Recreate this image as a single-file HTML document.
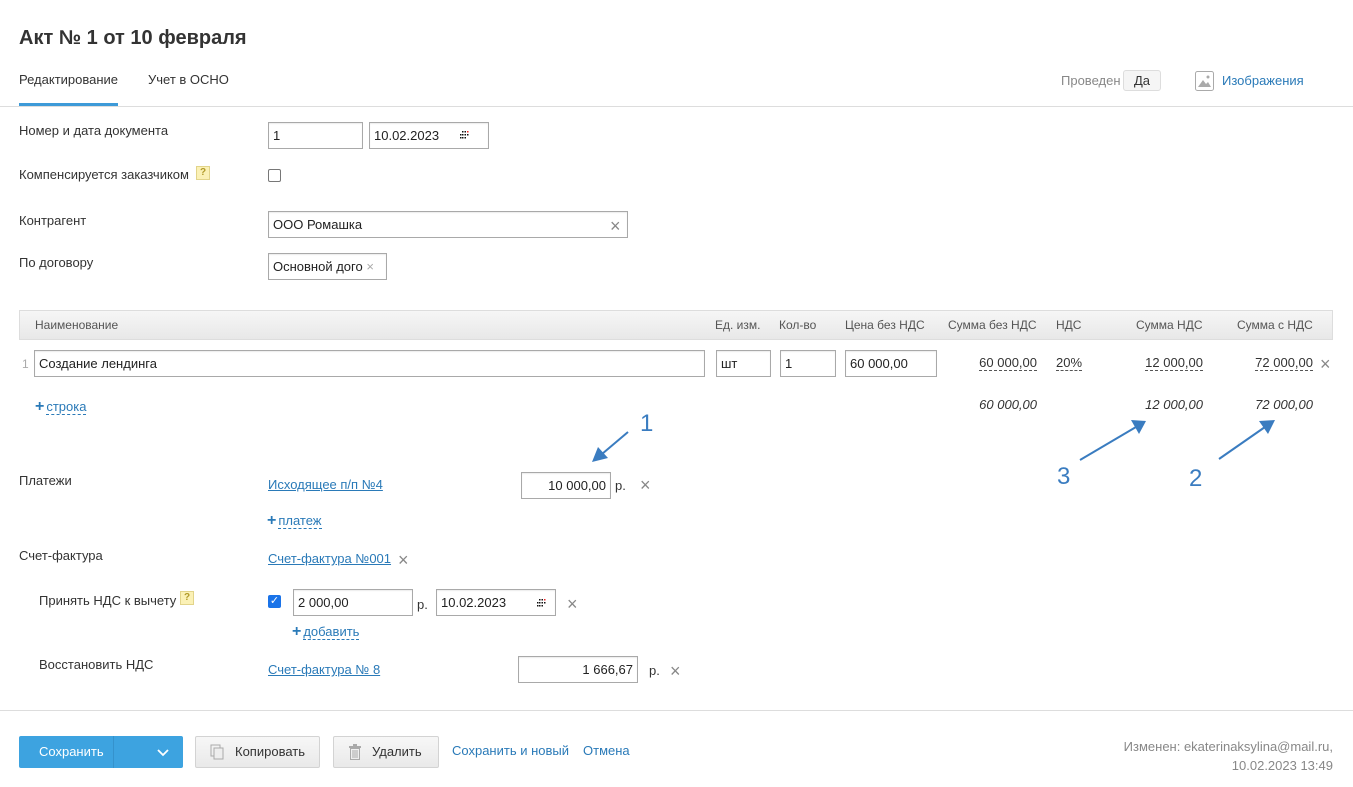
<!DOCTYPE html>
<html><head><meta charset="utf-8"><style>
*{box-sizing:border-box;margin:0;padding:0}
body{width:1353px;height:787px;background:#fff;font-family:"Liberation Sans",Arial,sans-serif;font-size:13px;color:#333;position:relative;overflow:hidden}
.a{position:absolute;white-space:nowrap;line-height:16px}
.in{position:absolute;border:1px solid #a9a9a9;background:#fff;font-size:13px;line-height:25px;padding:0 4px;color:#222;white-space:nowrap;box-shadow:inset 0 1px 1px rgba(0,0,0,.08)}
.r{text-align:right}
.lk{color:#2a7ab8;text-decoration:underline}
.dl{color:#2a7ab8;border-bottom:1px dashed #2a7ab8;line-height:15px}
.x{position:absolute;color:#888;font-size:18px;line-height:16px}
.q{position:absolute;width:14px;height:14px;background:#fbf1b6;border:1px solid #e2d48a;color:#b19a2a;font-size:10px;line-height:12px;text-align:center;font-weight:bold}
.th{position:absolute;top:318px;font-size:12px;color:#555;line-height:14px;white-space:nowrap}
.num{position:absolute;font-size:13px;color:#333;line-height:16px;white-space:nowrap;text-align:right}
.ds{border-bottom:1px dashed #555}
.it{font-style:italic}
.plus{color:#2a7ab8;font-weight:bold;font-size:16px;margin-right:2px}
.btn{position:absolute;top:736px;height:32px;border:1px solid #d3d3d3;border-radius:2px;background:linear-gradient(#f7f7f7,#e9e9e9);line-height:30px;color:#333;font-size:13px}
.cal{position:absolute}
</style></head><body>

<div class="a" style="left:19px;top:26px;font-size:20px;line-height:24px;font-weight:bold;color:#333">Акт № 1 от 10 февраля</div>
<div class="a" style="left:19px;top:72px">Редактирование</div>
<div style="position:absolute;left:19px;top:103px;width:99px;height:3px;background:#3d9ad8"></div>
<div class="a" style="left:148px;top:72px">Учет в ОСНО</div>
<div style="position:absolute;left:0;top:106px;width:1353px;height:1px;background:#ddd"></div>
<div class="a" style="left:1061px;top:73px;color:#888">Проведен</div>
<div style="position:absolute;left:1123px;top:70px;width:38px;height:21px;border:1px solid #ddd;border-radius:3px;background:#f5f5f5;text-align:center;line-height:19px;color:#333">Да</div>
<svg style="position:absolute;left:1195px;top:71px" width="19" height="20" viewBox="0 0 19 20"><rect x="0.5" y="0.5" width="18" height="19" rx="2" fill="#fff" stroke="#aaa"/><path d="M3 16 L8 9 L11 13 L13 11 L16 16Z" fill="#aaa"/><circle cx="13" cy="6" r="1.5" fill="#aaa"/></svg>
<div class="a" style="left:1222px;top:73px;color:#2a7ab8">Изображения</div>

<div class="a" style="left:19px;top:123px">Номер и дата документа</div>
<div class="in" style="left:268px;top:122px;width:95px;height:27px">1</div>
<div class="in" style="left:369px;top:122px;width:120px;height:27px">10.02.2023</div>
<svg class="cal" style="left:460px;top:131px" width="10" height="8"><g fill="#111"><rect x="2" y="0" width="1.5" height="1.5"/><rect x="4.5" y="0" width="1.5" height="1.5"/><rect x="7" y="0" width="1.5" height="1.5" fill="#e22"/><rect x="0" y="3" width="1.5" height="1.5"/><rect x="2" y="3" width="1.5" height="1.5"/><rect x="4.5" y="3" width="1.5" height="1.5"/><rect x="7" y="3" width="1.5" height="1.5"/><rect x="0" y="6" width="1.5" height="1.5"/><rect x="2" y="6" width="1.5" height="1.5"/><rect x="4.5" y="6" width="1.5" height="1.5"/></g></svg>
<div class="a" style="left:19px;top:167px">Компенсируется заказчиком</div>
<div class="q" style="left:196px;top:166px">?</div>
<div style="position:absolute;left:268px;top:169px;width:13px;height:13px;border:1px solid #777;border-radius:2px"></div>

<div class="a" style="left:19px;top:213px">Контрагент</div>
<div class="in" style="left:268px;top:211px;width:360px;height:27px">ООО Ромашка</div>
<div class="x" style="left:610px;top:218px">×</div>
<div class="a" style="left:19px;top:255px">По договору</div>
<div class="in" style="left:268px;top:253px;width:119px;height:27px">Основной дого <span style="color:#aaa">×</span></div>

<div style="position:absolute;left:19px;top:310px;width:1314px;height:30px;border:1px solid #ddd;background:linear-gradient(#f6f6f6,#e8e8e8)"></div>
<div class="th" style="left:35px">Наименование</div>
<div class="th" style="left:715px">Ед. изм.</div>
<div class="th" style="left:779px">Кол-во</div>
<div class="th" style="left:845px">Цена без НДС</div>
<div class="th" style="left:948px">Сумма без НДС</div>
<div class="th" style="left:1056px">НДС</div>
<div class="th" style="left:1136px">Сумма НДС</div>
<div class="th" style="left:1237px">Сумма с НДС</div>

<div class="a" style="left:22px;top:356px;color:#aaa;font-size:12px">1</div>
<div class="in" style="left:34px;top:350px;width:671px;height:27px">Создание лендинга</div>
<div class="in" style="left:716px;top:350px;width:55px;height:27px">шт</div>
<div class="in" style="left:780px;top:350px;width:56px;height:27px">1</div>
<div class="in" style="left:845px;top:350px;width:92px;height:27px">60 000,00</div>
<div class="num" style="left:937px;width:100px;top:355px"><span class="ds">60 000,00</span></div>
<div class="num" style="left:1056px;top:355px"><span class="ds">20%</span></div>
<div class="num" style="left:1103px;width:100px;top:355px"><span class="ds">12 000,00</span></div>
<div class="num" style="left:1213px;width:100px;top:355px"><span class="ds">72 000,00</span></div>
<div class="x" style="left:1320px;top:356px">×</div>
<div class="num it" style="left:937px;width:100px;top:397px">60 000,00</div>
<div class="num it" style="left:1103px;width:100px;top:397px">12 000,00</div>
<div class="num it" style="left:1213px;width:100px;top:397px">72 000,00</div>
<div class="a" style="left:35px;top:399px"><span class="plus">+</span><span class="dl">строка</span></div>

<svg style="position:absolute;left:0;top:0" width="1353" height="787">
<g stroke="#3a7cc0" stroke-width="2" fill="#3a7cc0">
<line x1="628" y1="432" x2="602" y2="454"/><path d="M592 462 L598 447 L608 458Z" stroke="none"/>
<line x1="1080" y1="460" x2="1136" y2="427"/><path d="M1146 421 L1131 420 L1139 434Z" stroke="none"/>
<line x1="1219" y1="459" x2="1265" y2="427"/><path d="M1275 420 L1259 421 L1268 434Z" stroke="none"/>
</g>
<g fill="#3a7cc0" font-family="Liberation Sans,sans-serif" font-size="24">
<text x="640" y="431">1</text><text x="1057" y="484">3</text><text x="1189" y="486">2</text>
</g></svg>

<div class="a" style="left:19px;top:473px">Платежи</div>
<div class="a lk" style="left:268px;top:477px">Исходящее п/п №4</div>
<div class="in r" style="left:521px;top:472px;width:90px;height:27px">10 000,00</div>
<div class="a" style="left:615px;top:478px">р.</div>
<div class="x" style="left:640px;top:477px">×</div>
<div class="a" style="left:267px;top:513px"><span class="plus">+</span><span class="dl">платеж</span></div>

<div class="a" style="left:19px;top:548px">Счет-фактура</div>
<div class="a lk" style="left:268px;top:551px">Счет-фактура №001</div>
<div class="x" style="left:398px;top:552px">×</div>

<div class="a" style="left:39px;top:593px">Принять НДС к вычету</div>
<div class="q" style="left:180px;top:591px">?</div>
<div style="position:absolute;left:268px;top:595px;width:13px;height:13px;background:#1a73e8;border-radius:2px;color:#fff;font-size:11px;line-height:13px;text-align:center">✓</div>
<div class="in" style="left:293px;top:589px;width:120px;height:27px">2 000,00</div>
<div class="a" style="left:417px;top:597px">р.</div>
<div class="in" style="left:436px;top:589px;width:120px;height:27px">10.02.2023</div>
<svg class="cal" style="left:537px;top:599px" width="10" height="8"><g fill="#111"><rect x="2" y="0" width="1.5" height="1.5"/><rect x="4.5" y="0" width="1.5" height="1.5"/><rect x="7" y="0" width="1.5" height="1.5" fill="#e22"/><rect x="0" y="3" width="1.5" height="1.5"/><rect x="2" y="3" width="1.5" height="1.5"/><rect x="4.5" y="3" width="1.5" height="1.5"/><rect x="7" y="3" width="1.5" height="1.5"/><rect x="0" y="6" width="1.5" height="1.5"/><rect x="2" y="6" width="1.5" height="1.5"/><rect x="4.5" y="6" width="1.5" height="1.5"/></g></svg>
<div class="x" style="left:567px;top:596px">×</div>
<div class="a" style="left:292px;top:624px"><span class="plus">+</span><span class="dl">добавить</span></div>

<div class="a" style="left:39px;top:657px">Восстановить НДС</div>
<div class="a lk" style="left:268px;top:662px">Счет-фактура № 8</div>
<div class="in r" style="left:518px;top:656px;width:120px;height:27px">1 666,67</div>
<div class="a" style="left:649px;top:663px">р.</div>
<div class="x" style="left:670px;top:663px">×</div>

<div style="position:absolute;left:0;top:710px;width:1353px;height:1px;background:#ddd"></div>
<div style="position:absolute;left:19px;top:736px;width:164px;height:32px;background:#3da3e0;border-radius:2px;color:#fff"><span style="position:absolute;left:20px;top:8px;line-height:16px">Сохранить</span><span style="position:absolute;left:94px;top:0;width:1px;height:32px;background:#3592cc"></span><svg style="position:absolute;left:138px;top:13px" width="12" height="8"><path d="M1 1 L6 6 L11 1" stroke="#fff" stroke-width="1.8" fill="none"/></svg></div>
<div class="btn" style="left:195px;width:125px"><svg style="position:absolute;left:14px;top:7px" width="14" height="16"><rect x="1" y="1" width="9" height="11" fill="none" stroke="#aaa"/><rect x="4" y="4" width="9" height="11" fill="#eee" stroke="#aaa"/></svg><span style="position:absolute;left:39px">Копировать</span></div>
<div class="btn" style="left:333px;width:106px"><svg style="position:absolute;left:14px;top:7px" width="14" height="16"><rect x="1" y="2" width="12" height="2" fill="#aaa"/><rect x="5" y="0" width="4" height="2" fill="#aaa"/><rect x="2.5" y="4.5" width="9" height="11" fill="none" stroke="#aaa"/><path d="M5 6v8M7 6v8M9 6v8" stroke="#aaa"/></svg><span style="position:absolute;left:38px">Удалить</span></div>
<div class="a" style="left:452px;top:743px;color:#2a7ab8">Сохранить и новый</div>
<div class="a" style="left:583px;top:743px;color:#2a7ab8">Отмена</div>
<div class="a r" style="right:20px;top:737px;color:#888;line-height:19px">Изменен: ekaterinaksylina@mail.ru,<br>10.02.2023 13:49</div>
</body></html>
